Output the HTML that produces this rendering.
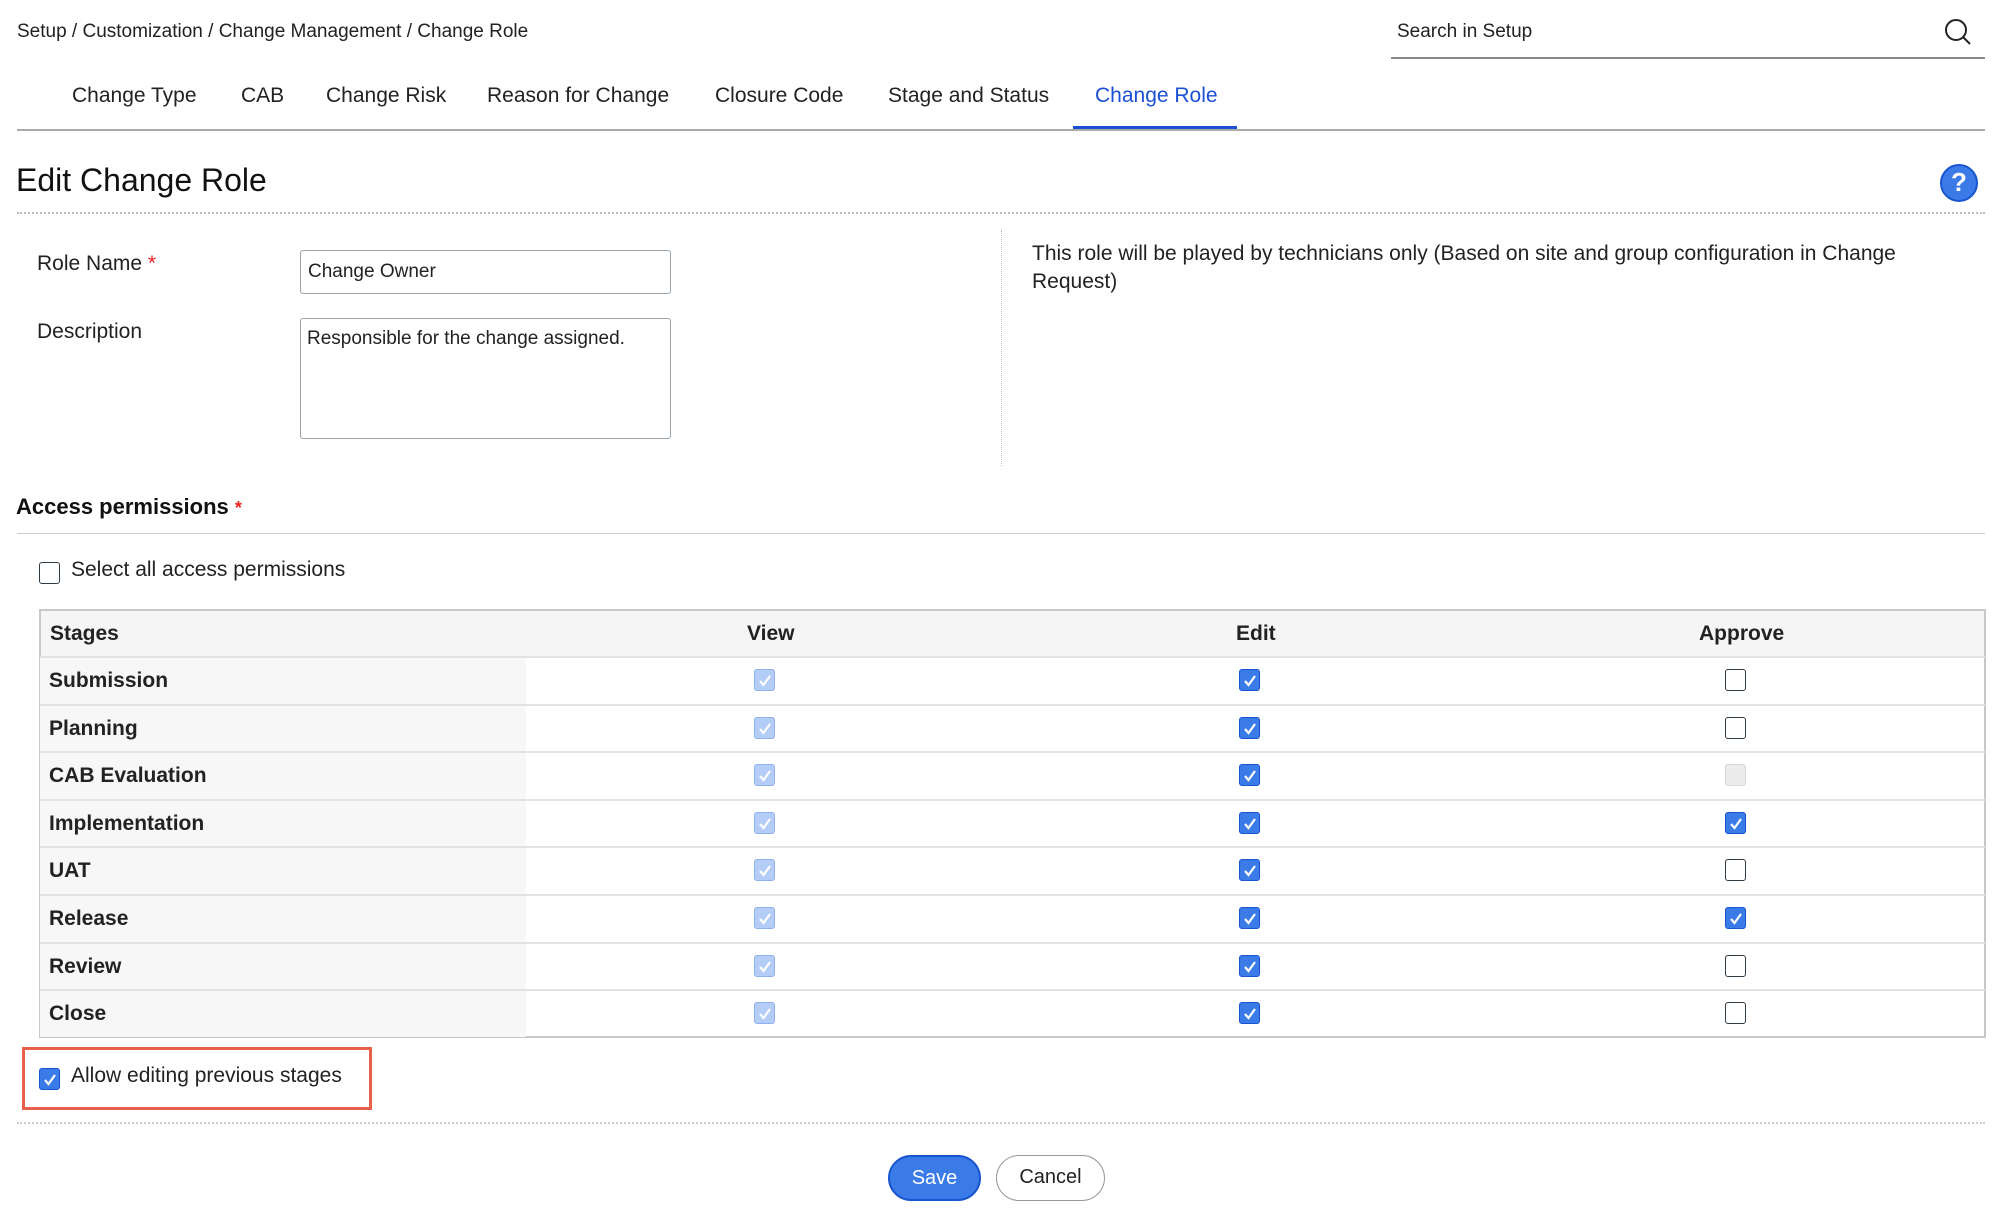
<!DOCTYPE html>
<html><head><meta charset="utf-8"><style>
*{box-sizing:border-box;margin:0;padding:0}
body{width:2000px;height:1227px;background:#fff;font-family:"Liberation Sans",sans-serif;color:#222;position:relative;overflow:hidden}
.a{position:absolute;white-space:nowrap}
.tab{position:absolute;top:84px;font-size:21px;color:#222}
.cb{position:absolute;width:21px;height:22px;border-radius:3px}
.cb svg{position:absolute;left:3px;top:4px}
.on{background:#3b7be8;border:1.5px solid #1a55d0}
.dis{background:#b3cdf6;border:1.5px solid #8fb2ee}
.off{background:#fff;border:1.8px solid #2f3b45}
.gr{background:#ececec;border:1.5px solid #d6d6d6}
.row{position:absolute;left:40px;width:1945px;height:47.6px;border-top:2px solid #e2e2e2}
.row .st{position:absolute;left:0;top:0;width:486px;height:100%;background:#f7f7f7}
.row .lb{position:absolute;left:9px;top:11px;font-size:21px;font-weight:bold}
</style></head><body>
<div class="a" style="left:17px;top:21px;font-size:19px">Setup / Customization / Change Management / Change Role</div>
<div class="a" style="left:1397px;top:21px;font-size:19px">Search in Setup</div>
<svg class="a" style="left:1944px;top:18px" width="28" height="28" viewBox="0 0 28 28"><circle cx="12" cy="12" r="10" fill="none" stroke="#222" stroke-width="2"/><line x1="19" y1="19" x2="26" y2="26" stroke="#222" stroke-width="2"/></svg>
<div class="a" style="left:1391px;top:57px;width:594px;height:2px;background:#888"></div>

<div class="tab" style="left:72px">Change Type</div>
<div class="tab" style="left:241px">CAB</div>
<div class="tab" style="left:326px">Change Risk</div>
<div class="tab" style="left:487px">Reason for Change</div>
<div class="tab" style="left:715px">Closure Code</div>
<div class="tab" style="left:888px">Stage and Status</div>
<div class="tab" style="left:1095px;color:#1a4fd6">Change Role</div>
<div class="a" style="left:17px;top:129px;width:1968px;height:2px;background:#aaa"></div>
<div class="a" style="left:1073px;top:126px;width:164px;height:3px;background:#1a4fd6"></div>

<div class="a" style="left:16px;top:162px;font-size:32px;color:#111">Edit Change Role</div>
<div class="a" style="left:1940px;top:164px;width:38px;height:38px;border-radius:50%;background:#3b7be8;border:2px solid #1a55d0;color:#fff;font-weight:bold;font-size:26px;text-align:center;line-height:33px">?</div>
<div class="a" style="left:17px;top:212px;width:1968px;border-top:2px dotted #bbb"></div>

<div class="a" style="left:37px;top:252px;font-size:21px">Role Name <span style="color:#e22">*</span></div>
<div class="a" style="left:300px;top:250px;width:371px;height:44px;border:1.5px solid #9aa4ad;border-radius:3px;font-size:19px;padding:10px 7px">Change Owner</div>
<div class="a" style="left:37px;top:320px;font-size:21px">Description</div>
<div class="a" style="left:300px;top:318px;width:371px;height:121px;border:1.5px solid #9aa4ad;border-radius:3px;font-size:19px;padding:9px 6px">Responsible for the change assigned.</div>
<div class="a" style="left:1001px;top:230px;height:236px;border-left:1.5px dotted #bbb"></div>
<div class="a" style="left:1032px;top:240px;font-size:21px;line-height:28px;white-space:normal;width:950px">This role will be played by technicians only (Based on site and group configuration in Change Request)</div>

<div class="a" style="left:16px;top:494px;font-size:22px;font-weight:bold;color:#111">Access permissions <span style="color:#e22;font-size:18px">*</span></div>
<div class="a" style="left:17px;top:533px;width:1968px;height:1px;background:#ccc"></div>
<div class="cb off" style="left:39px;top:562px"></div>
<div class="a" style="left:71px;top:558px;font-size:21px">Select all access permissions</div>

<div class="a" style="left:39px;top:609px;width:1947px;height:429px;border:2px solid #c8c8c8;background:#fff">
<div style="position:absolute;left:0;top:0;width:100%;height:46px;background:#f5f5f5"></div>
<div class="a" style="left:9px;top:11px;font-size:21px;font-weight:bold">Stages</div>
<div class="a" style="left:706px;top:11px;font-size:21px;font-weight:bold">View</div>
<div class="a" style="left:1195px;top:11px;font-size:21px;font-weight:bold">Edit</div>
<div class="a" style="left:1658px;top:11px;font-size:21px;font-weight:bold">Approve</div>
</div>
<div id="rows"></div>

<div class="a" style="left:22px;top:1047px;width:350px;height:63px;border:3px solid #e8604a"></div>
<div class="cb on" style="left:39px;top:1068px"><svg width="14" height="13" viewBox="0 0 14 13"><path d="M2 7l3.5 4L12 2" fill="none" stroke="#fff" stroke-width="2.2"/></svg></div>
<div class="a" style="left:71px;top:1064px;font-size:21px">Allow editing previous stages</div>
<div class="a" style="left:17px;top:1122px;width:1968px;border-top:2px dotted #ccc"></div>

<div class="a" style="left:888px;top:1155px;width:93px;height:46px;border-radius:23px;background:#3b7be8;border:2px solid #1a55d0;color:#fff;font-size:20px;text-align:center;line-height:42px">Save</div>
<div class="a" style="left:996px;top:1155px;width:109px;height:46px;border-radius:23px;background:#fff;border:1.5px solid #999;color:#222;font-size:20px;text-align:center;line-height:43px">Cancel</div>

<script>
var names=["Submission","Planning","CAB Evaluation","Implementation","UAT","Release","Review","Close"];
var ap=["off","off","gr","on","off","on","off","off"];
var chk='<svg width="14" height="13" viewBox="0 0 14 13"><path d="M2 7l3.5 4L12 2" fill="none" stroke="#fff" stroke-width="2.2"/></svg>';
var h="";
for(var i=0;i<8;i++){var t=656+i*47.6;
h+='<div class="row" style="top:'+t+'px"><div class="st"></div><div class="lb">'+names[i]+'</div></div>';
var cy=t+13;
h+='<div class="cb dis" style="left:754px;top:'+cy+'px">'+chk+'</div>';
h+='<div class="cb on" style="left:1239px;top:'+cy+'px">'+chk+'</div>';
h+='<div class="cb '+ap[i]+'" style="left:1725px;top:'+cy+'px">'+(ap[i]=="on"?chk:"")+'</div>';}
document.getElementById("rows").innerHTML=h;
</script>
</body></html>
